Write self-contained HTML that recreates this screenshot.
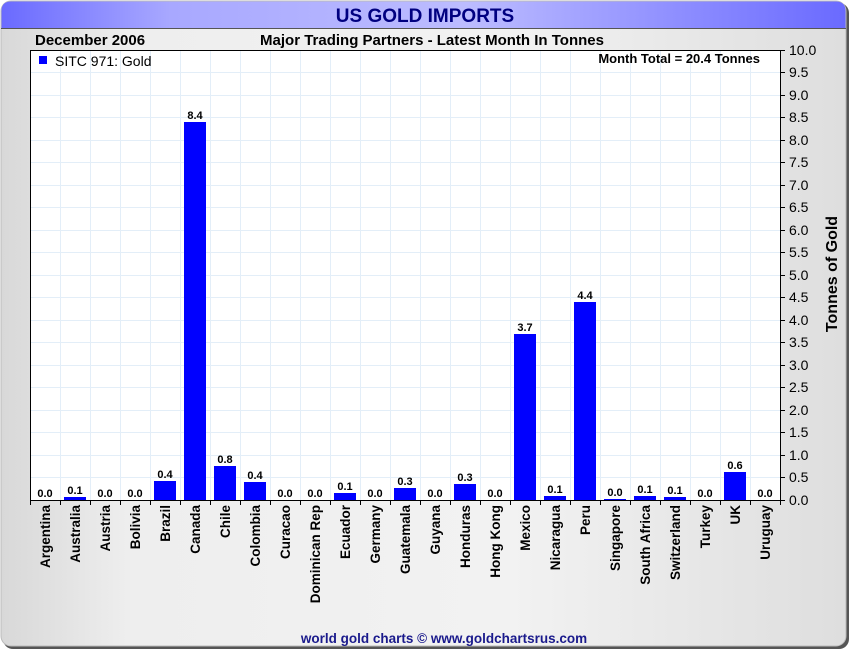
<!DOCTYPE html>
<html><head><meta charset="utf-8"><style>
body{margin:0;width:850px;height:650px;background:#fff;overflow:hidden;font-family:"Liberation Sans",Arial,sans-serif}
</style></head><body>
<svg width="850" height="650" xmlns="http://www.w3.org/2000/svg" font-family="Liberation Sans, Arial, sans-serif">
<defs>
<linearGradient id="tb" x1="0" x2="1"><stop offset="0" stop-color="#6a6aff"/><stop offset="0.2" stop-color="#a8a8ff"/><stop offset="0.55" stop-color="#bcbcff"/><stop offset="1" stop-color="#6a6aff"/></linearGradient>
<linearGradient id="bg" x1="0" x2="1"><stop offset="0" stop-color="#d8d8d8"/><stop offset="0.15" stop-color="#eeeeee"/><stop offset="0.6" stop-color="#f2f2f2"/><stop offset="1" stop-color="#dedede"/></linearGradient>
</defs>
<rect x="3" y="3" width="846" height="646" rx="10" fill="#555"/>
<rect x="1" y="1" width="845" height="645" rx="10" fill="url(#bg)" stroke="#bbb"/>
<path d="M1.5 28 V11 Q1.5 1.5 11 1.5 H836 Q845.5 1.5 845.5 11 V28 Z" fill="url(#tb)"/>
<line x1="1" y1="28.5" x2="846" y2="28.5" stroke="#555"/>
<text x="425" y="22" text-anchor="middle" font-size="19" font-weight="bold" fill="#000080">US GOLD IMPORTS</text>
<text x="35" y="45" font-size="15" font-weight="bold" fill="#000">December 2006</text>
<text x="432" y="45" text-anchor="middle" font-size="15" font-weight="bold" fill="#000">Major Trading Partners - Latest Month In Tonnes</text>
<rect x="30.5" y="50.5" width="750" height="450" fill="#fff" stroke="#000"/>
<g stroke="#e3eef8" stroke-width="1">
<path d="M60.5 51V500M90.5 51V500M120.5 51V500M150.5 51V500M180.5 51V500M210.5 51V500M240.5 51V500M270.5 51V500M300.5 51V500M330.5 51V500M360.5 51V500M390.5 51V500M420.5 51V500M450.5 51V500M480.5 51V500M510.5 51V500M540.5 51V500M570.5 51V500M600.5 51V500M630.5 51V500M660.5 51V500M690.5 51V500M720.5 51V500M750.5 51V500"/>
<path d="M31 72.5H780M31 95.5H780M31 117.5H780M31 140.5H780M31 162.5H780M31 185.5H780M31 207.5H780M31 230.5H780M31 252.5H780M31 275.5H780M31 297.5H780M31 320.5H780M31 342.5H780M31 365.5H780M31 387.5H780M31 410.5H780M31 432.5H780M31 455.5H780M31 477.5H780"/>
</g>
<rect x="39" y="56" width="8" height="8" fill="#0000ff"/>
<text x="55" y="66" font-size="14" fill="#000">SITC 971: Gold</text>
<text x="760" y="63" text-anchor="end" font-size="13" font-weight="bold" fill="#000">Month Total = 20.4 Tonnes</text>
<g fill="#0000ff">
<rect x="64" y="497" width="22" height="3"/>
<rect x="154" y="481" width="22" height="19"/>
<rect x="184" y="122" width="22" height="378"/>
<rect x="214" y="466" width="22" height="34"/>
<rect x="244" y="482" width="22" height="18"/>
<rect x="334" y="493" width="22" height="7"/>
<rect x="394" y="488" width="22" height="12"/>
<rect x="454" y="484" width="22" height="16"/>
<rect x="514" y="334" width="22" height="166"/>
<rect x="544" y="496" width="22" height="4"/>
<rect x="574" y="302" width="22" height="198"/>
<rect x="604" y="499" width="22" height="1"/>
<rect x="634" y="496" width="22" height="4"/>
<rect x="664" y="497" width="22" height="3"/>
<rect x="724" y="472" width="22" height="28"/>
</g>
<g font-size="11" font-weight="bold" text-anchor="middle" fill="#000">
<text x="45" y="497">0.0</text><text x="75" y="494">0.1</text><text x="105" y="497">0.0</text><text x="135" y="497">0.0</text>
<text x="165" y="478">0.4</text><text x="195" y="119">8.4</text><text x="225" y="463">0.8</text><text x="255" y="479">0.4</text>
<text x="285" y="497">0.0</text><text x="315" y="497">0.0</text><text x="345" y="490">0.1</text><text x="375" y="497">0.0</text>
<text x="405" y="485">0.3</text><text x="435" y="497">0.0</text><text x="465" y="481">0.3</text><text x="495" y="497">0.0</text>
<text x="525" y="331">3.7</text><text x="555" y="493">0.1</text><text x="585" y="299">4.4</text><text x="615" y="496">0.0</text>
<text x="645" y="493">0.1</text><text x="675" y="494">0.1</text><text x="705" y="497">0.0</text><text x="735" y="469">0.6</text><text x="765" y="497">0.0</text>
</g>
<line x1="30" y1="500.5" x2="781" y2="500.5" stroke="#000"/>
<line x1="780.5" y1="50" x2="780.5" y2="501" stroke="#000"/>
<g stroke="#000">
<path d="M30.5 500V505M60.5 500V505M90.5 500V505M120.5 500V505M150.5 500V505M180.5 500V505M210.5 500V505M240.5 500V505M270.5 500V505M300.5 500V505M330.5 500V505M360.5 500V505M390.5 500V505M420.5 500V505M450.5 500V505M480.5 500V505M510.5 500V505M540.5 500V505M570.5 500V505M600.5 500V505M630.5 500V505M660.5 500V505M690.5 500V505M720.5 500V505M750.5 500V505M780.5 500V505"/>
<path d="M780 50.5H785M780 72.5H785M780 95.5H785M780 117.5H785M780 140.5H785M780 162.5H785M780 185.5H785M780 207.5H785M780 230.5H785M780 252.5H785M780 275.5H785M780 297.5H785M780 320.5H785M780 342.5H785M780 365.5H785M780 387.5H785M780 410.5H785M780 432.5H785M780 455.5H785M780 477.5H785M780 500.5H785"/>
</g>
<g font-size="14" fill="#000">
<text x="789" y="55">10.0</text><text x="789" y="77">9.5</text><text x="789" y="100">9.0</text><text x="789" y="122">8.5</text><text x="789" y="145">8.0</text>
<text x="789" y="167">7.5</text><text x="789" y="190">7.0</text><text x="789" y="212">6.5</text><text x="789" y="235">6.0</text><text x="789" y="257">5.5</text>
<text x="789" y="280">5.0</text><text x="789" y="302">4.5</text><text x="789" y="325">4.0</text><text x="789" y="347">3.5</text><text x="789" y="370">3.0</text>
<text x="789" y="392">2.5</text><text x="789" y="415">2.0</text><text x="789" y="437">1.5</text><text x="789" y="460">1.0</text><text x="789" y="482">0.5</text><text x="789" y="505">0.0</text>
</g>
<text transform="translate(837,274) rotate(-90)" text-anchor="middle" font-size="16" font-weight="bold" fill="#000">Tonnes of Gold</text>
<g font-size="13.5" font-weight="bold" fill="#000" text-anchor="end">
<text transform="translate(50,505) rotate(-90)">Argentina</text>
<text transform="translate(80,505) rotate(-90)">Australia</text>
<text transform="translate(110,505) rotate(-90)">Austria</text>
<text transform="translate(140,505) rotate(-90)">Bolivia</text>
<text transform="translate(170,505) rotate(-90)">Brazil</text>
<text transform="translate(200,505) rotate(-90)">Canada</text>
<text transform="translate(230,505) rotate(-90)">Chile</text>
<text transform="translate(260,505) rotate(-90)">Colombia</text>
<text transform="translate(290,505) rotate(-90)">Curacao</text>
<text transform="translate(320,505) rotate(-90)">Dominican Rep</text>
<text transform="translate(350,505) rotate(-90)">Ecuador</text>
<text transform="translate(380,505) rotate(-90)">Germany</text>
<text transform="translate(410,505) rotate(-90)">Guatemala</text>
<text transform="translate(440,505) rotate(-90)">Guyana</text>
<text transform="translate(470,505) rotate(-90)">Honduras</text>
<text transform="translate(500,505) rotate(-90)">Hong Kong</text>
<text transform="translate(530,505) rotate(-90)">Mexico</text>
<text transform="translate(560,505) rotate(-90)">Nicaragua</text>
<text transform="translate(590,505) rotate(-90)">Peru</text>
<text transform="translate(620,505) rotate(-90)">Singapore</text>
<text transform="translate(650,505) rotate(-90)">South Africa</text>
<text transform="translate(680,505) rotate(-90)">Switzerland</text>
<text transform="translate(710,505) rotate(-90)">Turkey</text>
<text transform="translate(740,505) rotate(-90)">UK</text>
<text transform="translate(770,505) rotate(-90)">Uruguay</text>
</g>
<text x="444" y="643" text-anchor="middle" font-size="13.5" font-weight="bold" fill="#1a1a8c">world gold charts © www.goldchartsrus.com</text>
</svg>
</body></html>
